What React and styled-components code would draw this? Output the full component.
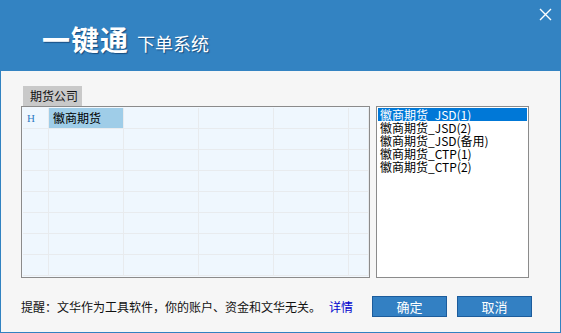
import React, { useState } from 'react';
import styled, { createGlobalStyle } from 'styled-components';

const GlobalStyle = createGlobalStyle`
  html, body {
    margin: 0;
    padding: 0;
    background: #f6f6f6;
  }
  body {
    font-family: "Noto Sans CJK SC", "Noto Sans", sans-serif;
  }
`;

const brokers = [
	'徽商期货_JSD(1)',
	'徽商期货_JSD(2)',
	'徽商期货_JSD(备用)',
	'徽商期货_CTP(1)',
	'徽商期货_CTP(2)',
];

const Window = styled.div`
	width: 561px;
	height: 333px;
	box-sizing: border-box;
	border: 1px solid #3182c1;
	border-top: none;
	background: #f6f6f6;
	display: flex;
	flex-direction: column;
`;

const TitleBar = styled.div`
	height: 71px;
	margin: 0 -1px;
	background: #3383c2;
	display: flex;
	align-items: flex-start;
	padding: 21px 0 0 42px;
	box-sizing: border-box;
	position: relative;
	color: #fff;
	text-shadow: 1px 1px 1px rgba(0, 30, 70, 0.55);
`;

const Logo = styled.span`
	font-size: 28px;
	line-height: 36px;
	font-weight: bold;
	letter-spacing: 1px;
`;

const SubTitle = styled.span`
	font-size: 18px;
	line-height: 36px;
	margin-left: 8px;
	padding-top: 4px;
`;

const CloseButton = styled.button`
	position: absolute;
	right: 9px;
	top: 8px;
	width: 13px;
	height: 13px;
	padding: 0;
	border: none;
	background: transparent;
	cursor: pointer;
	display: flex;
`;

const Body = styled.div`
	flex: 1;
	display: flex;
	flex-direction: column;
	padding: 15px 0 0 20px;
`;

const Tab = styled.div`
	align-self: flex-start;
	margin-left: 2px;
	height: 20px;
	width: 59px;
	box-sizing: border-box;
	padding-left: 7px;
	background: #c9c9c9;
	font-size: 12px;
	line-height: 20px;
	color: #111;
`;

const MainRow = styled.div`
	display: flex;
	gap: 6px;
	height: 172px;
`;

const GridPanel = styled.div`
	width: 349px;
	height: 172px;
	box-sizing: border-box;
	border: 1px solid #8b8b8b;
	padding: 1px 0 0 1px;
	background: #f2f8fe;
	overflow: hidden;
	display: grid;
	grid-template-columns: 26px repeat(4, 75px) 1fr;
	grid-auto-rows: 21px;
`;

const Cell = styled.div`
	box-sizing: border-box;
	border-right: 1px solid #e8ebee;
	border-bottom: 1px solid #e8ebee;
	background: ${(p) => (p.$selected ? '#9fcde8' : '#eff7fe')};
	font-size: 12px;
	line-height: 20px;
	padding-left: 4px;
	color: #000;
	white-space: nowrap;
`;

const RowMark = styled(Cell)`
	font-family: "Liberation Serif", serif;
	font-size: 11px;
	color: #2e7bc4;
	padding-left: 4px;
`;

const ListBox = styled.div`
	width: 153px;
	height: 172px;
	box-sizing: border-box;
	border: 1px solid #8b8b8b;
	background: #fff;
	padding: 1px;
`;

const ListItem = styled.div`
	height: 13px;
	line-height: 13px;
	font-size: 12px;
	padding-left: 2px;
	white-space: nowrap;
	cursor: default;
	background: ${(p) => (p.$active ? '#0078d7' : 'transparent')};
	color: ${(p) => (p.$active ? '#fff' : '#000')};
`;

const Footer = styled.div`
	display: flex;
	align-items: center;
	margin-top: 18px;
	height: 20px;
`;

const Notice = styled.span`
	font-size: 12px;
	color: #111;
`;

const DetailLink = styled.a`
	font-size: 12px;
	color: #0000cc;
	margin-left: 8px;
	text-decoration: none;
	cursor: pointer;
`;

const ButtonGroup = styled.div`
	display: flex;
	gap: 10px;
	margin-left: 19px;
`;

const Button = styled.button`
	width: 75px;
	height: 21px;
	box-sizing: border-box;
	border: 1px solid #1c5c9c;
	background: #3380c3;
	color: #fff;
	font-family: "Noto Sans CJK SC", sans-serif;
	font-size: 13px;
	line-height: 17px;
	padding: 0;
	cursor: pointer;
`;

const App = () => {
	const [active, setActive] = useState(0);
	const rows = Array.from({ length: 8 });

	return (
		<>
			<GlobalStyle />
			<Window>
				<TitleBar>
					<Logo>一键通</Logo>
					<SubTitle>下单系统</SubTitle>
					<CloseButton aria-label="close">
						<svg width="13" height="13" viewBox="0 0 13 13">
							<path d="M1 1 L12 12 M12 1 L1 12" stroke="#fff" strokeWidth="1.4" />
						</svg>
					</CloseButton>
				</TitleBar>
				<Body>
					<Tab>期货公司</Tab>
					<MainRow>
						<GridPanel>
							{rows.map((_, r) => (
								<React.Fragment key={r}>
									<RowMark>{r === 0 ? 'H' : ''}</RowMark>
									<Cell $selected={r === 0}>{r === 0 ? '徽商期货' : ''}</Cell>
									<Cell />
									<Cell />
									<Cell />
									<Cell />
								</React.Fragment>
							))}
						</GridPanel>
						<ListBox>
							{brokers.map((b, i) => (
								<ListItem key={b} $active={i === active} onClick={() => setActive(i)}>
									{b}
								</ListItem>
							))}
						</ListBox>
					</MainRow>
					<Footer>
						<Notice>提醒：文华作为工具软件，你的账户、资金和文华无关。</Notice>
						<DetailLink>详情</DetailLink>
						<ButtonGroup>
							<Button>确定</Button>
							<Button>取消</Button>
						</ButtonGroup>
					</Footer>
				</Body>
			</Window>
		</>
	);
};

export default App;
